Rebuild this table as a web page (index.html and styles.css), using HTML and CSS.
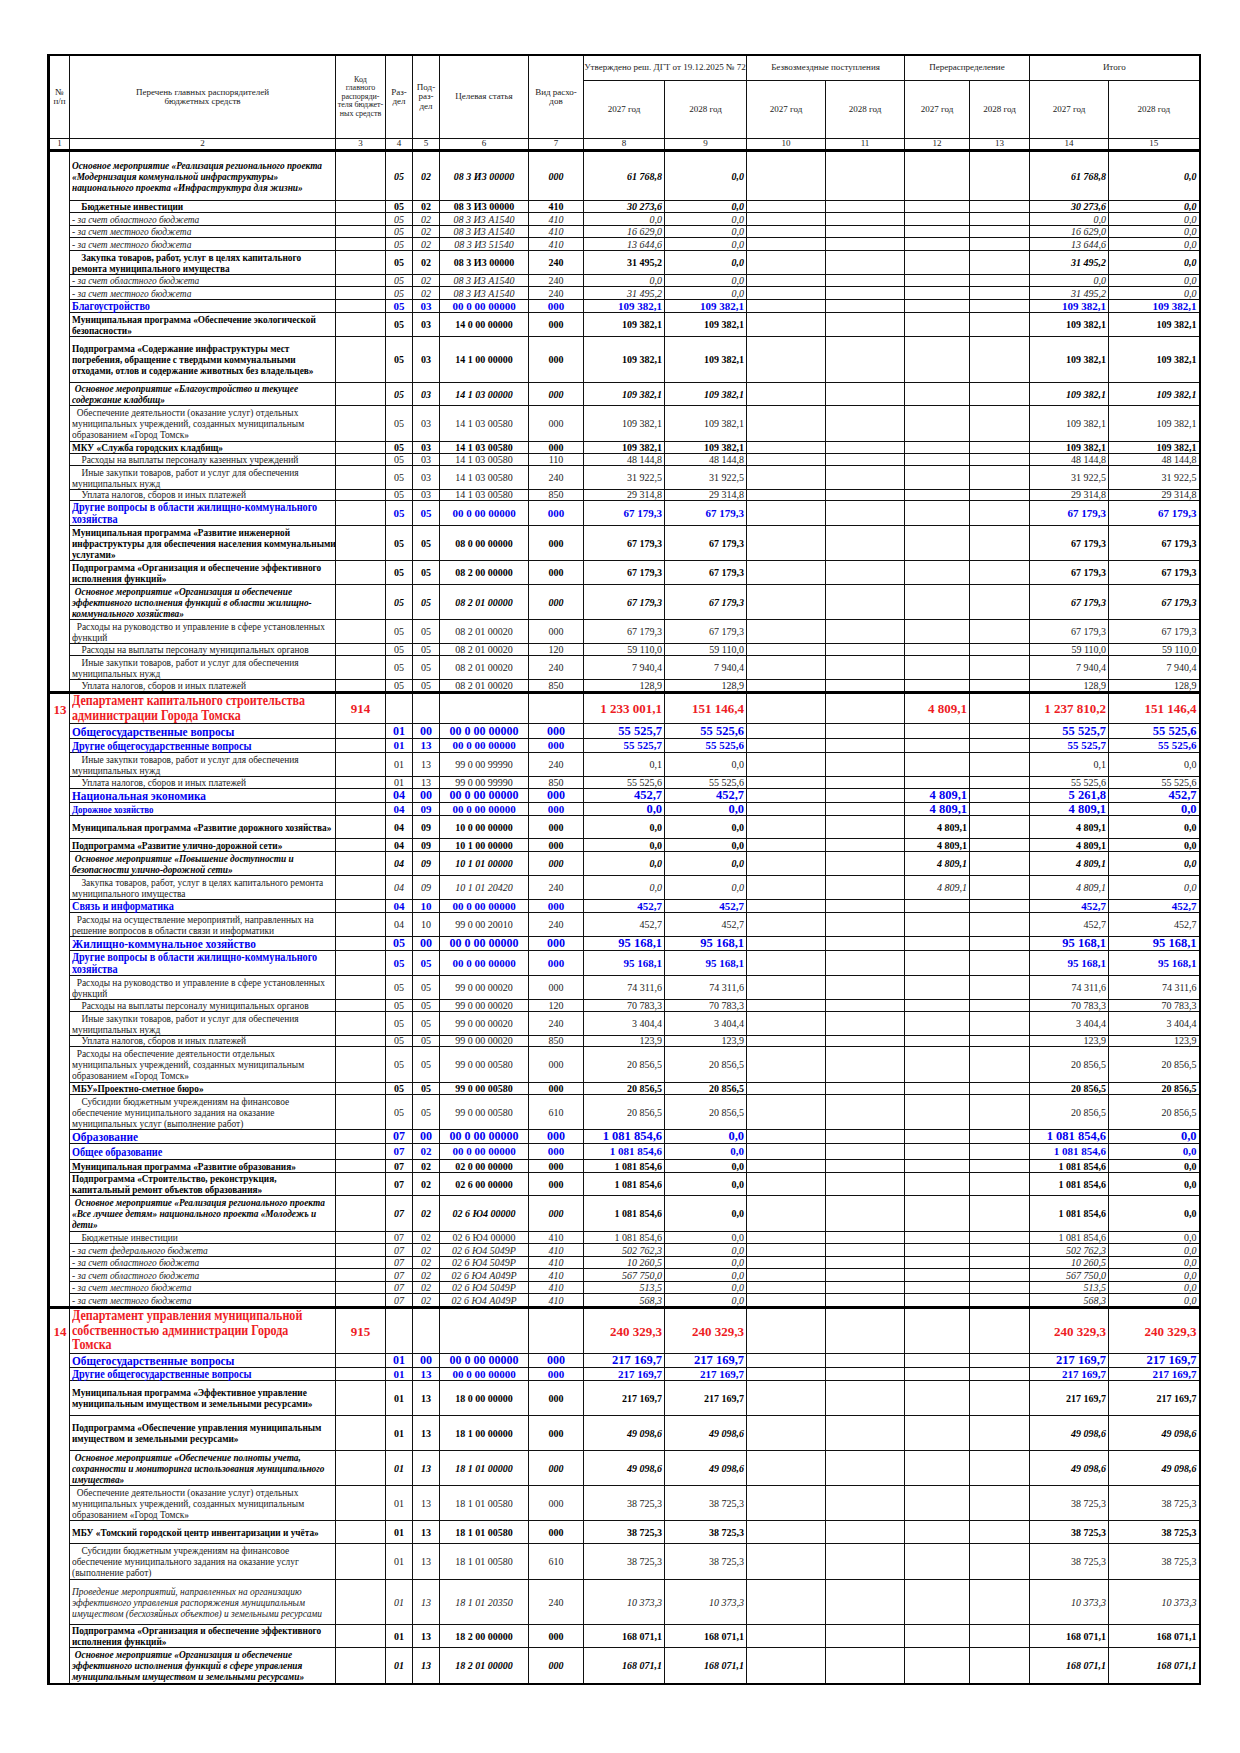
FILE: index.html
```html
<!DOCTYPE html>
<html lang="ru">
<head>
<meta charset="utf-8">
<title>Ведомственная структура расходов</title>
<link rel="stylesheet" href="styles.css">
</head>
<body>
<div class="page">
<table class="tbl">
<colgroup>
<col class="w21"><col class="w266"><col class="w50"><col class="w27"><col class="w27"><col class="w89"><col class="w55">
<col class="w81"><col class="w82"><col class="w79"><col class="w79"><col class="w65"><col class="w60"><col class="w79"><col class="w91">
</colgroup>
<thead>
<tr class="hd1">
<th rowspan="2" class="first">№<br>п/п</th>
<th rowspan="2">Перечень главных распорядителей<br>бюджетных средств</th>
<th rowspan="2" class="code-h">Код<br>главного<br>распоряди-<br>теля бюджет-<br>ных средств</th>
<th rowspan="2">Раз-<br>дел</th>
<th rowspan="2">Под-<br>раз-<br>дел</th>
<th rowspan="2">Целевая статья</th>
<th rowspan="2">Вид расхо-<br>дов</th>
<th colspan="2">Утверждено реш. ДГТ от 19.12.2025 № 72</th>
<th colspan="2">Безвозмездные поступления</th>
<th colspan="2">Перераспределение</th>
<th colspan="2">Итого</th>
</tr>
<tr class="hd2">
<th>2027 год</th><th>2028 год</th><th>2027 год</th><th>2028 год</th><th>2027 год</th><th>2028 год</th><th>2027 год</th><th>2028 год</th>
</tr>
<tr class="hd3">
<th class="first">1</th><th>2</th><th>3</th><th>4</th><th>5</th><th>6</th><th>7</th><th>8</th><th>9</th><th>10</th><th>11</th><th>12</th><th>13</th><th>14</th><th>15</th>
</tr>
</thead>
<tbody>
<tr class="h49 bi"><td class="num" rowspan="25"></td><td class="n"><span>Основное мероприятие «Реализация регионального проекта<br>«Модернизация коммунальной инфраструктуры»<br>национального проекта «Инфраструктура для жизни»</span></td><td></td><td>05</td><td>02</td><td>08 3 И3 00000</td><td>000</td><td class="v">61 768,8</td><td class="v">0,0</td><td></td><td></td><td></td><td></td><td class="v">61 768,8</td><td class="v">0,0</td></tr>
<tr class="h12 b"><td class="n"><span class="ti10">Бюджетные инвестиции</span></td><td></td><td>05</td><td>02</td><td>08 3 И3 00000</td><td>410</td><td class="v it">30 273,6</td><td class="v it">0,0</td><td></td><td></td><td></td><td></td><td class="v it">30 273,6</td><td class="v it">0,0</td></tr>
<tr class="h13 i"><td class="n"><span>- за счет областного бюджета</span></td><td></td><td>05</td><td>02</td><td>08 3 И3 А1540</td><td>410</td><td class="v">0,0</td><td class="v">0,0</td><td></td><td></td><td></td><td></td><td class="v">0,0</td><td class="v">0,0</td></tr>
<tr class="h12 i"><td class="n"><span>- за счет местного бюджета</span></td><td></td><td>05</td><td>02</td><td>08 3 И3 А1540</td><td>410</td><td class="v">16 629,0</td><td class="v">0,0</td><td></td><td></td><td></td><td></td><td class="v">16 629,0</td><td class="v">0,0</td></tr>
<tr class="h13 i"><td class="n"><span>- за счет местного бюджета</span></td><td></td><td>05</td><td>02</td><td>08 3 И3 51540</td><td>410</td><td class="v">13 644,6</td><td class="v">0,0</td><td></td><td></td><td></td><td></td><td class="v">13 644,6</td><td class="v">0,0</td></tr>
<tr class="h24 b"><td class="n"><span class="ti10">Закупка товаров, работ, услуг в целях капитального<br>ремонта муниципального имущества</span></td><td></td><td>05</td><td>02</td><td>08 3 И3 00000</td><td>240</td><td class="v">31 495,2</td><td class="v it">0,0</td><td></td><td></td><td></td><td></td><td class="v it">31 495,2</td><td class="v it">0,0</td></tr>
<tr class="h12 i"><td class="n"><span>- за счет областного бюджета</span></td><td></td><td>05</td><td>02</td><td>08 3 И3 А1540</td><td class="up">240</td><td class="v">0,0</td><td class="v">0,0</td><td></td><td></td><td></td><td></td><td class="v">0,0</td><td class="v">0,0</td></tr>
<tr class="h13 i"><td class="n"><span>- за счет местного бюджета</span></td><td></td><td>05</td><td>02</td><td>08 3 И3 А1540</td><td class="up">240</td><td class="v">31 495,2</td><td class="v">0,0</td><td></td><td></td><td></td><td></td><td class="v">31 495,2</td><td class="v">0,0</td></tr>
<tr class="h12 bl md"><td class="n"><span>Благоустройство</span></td><td></td><td>05</td><td>03</td><td>00 0 00 00000</td><td>000</td><td class="v">109 382,1</td><td class="v">109 382,1</td><td></td><td></td><td></td><td></td><td class="v">109 382,1</td><td class="v">109 382,1</td></tr>
<tr class="h24 b"><td class="n"><span>Муниципальная программа «Обеспечение экологической<br>безопасности»</span></td><td></td><td>05</td><td>03</td><td>14 0 00 00000</td><td>000</td><td class="v">109 382,1</td><td class="v">109 382,1</td><td></td><td></td><td></td><td></td><td class="v">109 382,1</td><td class="v">109 382,1</td></tr>
<tr class="h47 b"><td class="n"><span>Подпрограмма «Содержание инфраструктуры мест<br>погребения, обращение с твердыми коммунальными<br>отходами, отлов и содержание животных без владельцев»</span></td><td></td><td>05</td><td>03</td><td>14 1 00 00000</td><td>000</td><td class="v">109 382,1</td><td class="v">109 382,1</td><td></td><td></td><td></td><td></td><td class="v">109 382,1</td><td class="v">109 382,1</td></tr>
<tr class="h23 bi"><td class="n"><span class="ti3">Основное мероприятие «Благоустройство и текущее<br>содержание кладбищ»</span></td><td></td><td>05</td><td>03</td><td>14 1 03 00000</td><td>000</td><td class="v">109 382,1</td><td class="v">109 382,1</td><td></td><td></td><td></td><td></td><td class="v">109 382,1</td><td class="v">109 382,1</td></tr>
<tr class="h36"><td class="n"><span class="ti5">Обеспечение деятельности (оказание услуг) отдельных<br>муниципальных учреждений, созданных муниципальным<br>образованием «Город Томск»</span></td><td></td><td>05</td><td>03</td><td>14 1 03 00580</td><td>000</td><td class="v">109 382,1</td><td class="v">109 382,1</td><td></td><td></td><td></td><td></td><td class="v">109 382,1</td><td class="v">109 382,1</td></tr>
<tr class="h12 b"><td class="n"><span>МКУ «Служба городских кладбищ»</span></td><td></td><td>05</td><td>03</td><td>14 1 03 00580</td><td>000</td><td class="v">109 382,1</td><td class="v">109 382,1</td><td></td><td></td><td></td><td></td><td class="v">109 382,1</td><td class="v">109 382,1</td></tr>
<tr class="h12"><td class="n"><span class="ti10">Расходы на выплаты персоналу казенных учреждений</span></td><td></td><td>05</td><td>03</td><td>14 1 03 00580</td><td>110</td><td class="v">48 144,8</td><td class="v">48 144,8</td><td></td><td></td><td></td><td></td><td class="v">48 144,8</td><td class="v">48 144,8</td></tr>
<tr class="h24"><td class="n"><span class="ti10">Иные закупки товаров, работ и услуг для обеспечения<br>муниципальных нужд</span></td><td></td><td>05</td><td>03</td><td>14 1 03 00580</td><td>240</td><td class="v">31 922,5</td><td class="v">31 922,5</td><td></td><td></td><td></td><td></td><td class="v">31 922,5</td><td class="v">31 922,5</td></tr>
<tr class="h11"><td class="n"><span class="ti10">Уплата налогов, сборов и иных платежей</span></td><td></td><td>05</td><td>03</td><td>14 1 03 00580</td><td>850</td><td class="v">29 314,8</td><td class="v">29 314,8</td><td></td><td></td><td></td><td></td><td class="v">29 314,8</td><td class="v">29 314,8</td></tr>
<tr class="h25 bl md"><td class="n"><span>Другие вопросы в области жилищно-коммунального<br>хозяйства</span></td><td></td><td>05</td><td>05</td><td>00 0 00 00000</td><td>000</td><td class="v">67 179,3</td><td class="v">67 179,3</td><td></td><td></td><td></td><td></td><td class="v">67 179,3</td><td class="v">67 179,3</td></tr>
<tr class="h35 b"><td class="n"><span>Муниципальная программа «Развитие инженерной<br>инфраструктуры для обеспечения населения коммунальными<br>услугами»</span></td><td></td><td>05</td><td>05</td><td>08 0 00 00000</td><td>000</td><td class="v">67 179,3</td><td class="v">67 179,3</td><td></td><td></td><td></td><td></td><td class="v">67 179,3</td><td class="v">67 179,3</td></tr>
<tr class="h24 b"><td class="n"><span>Подпрограмма «Организация и обеспечение эффективного<br>исполнения функций»</span></td><td></td><td>05</td><td>05</td><td>08 2 00 00000</td><td>000</td><td class="v">67 179,3</td><td class="v">67 179,3</td><td></td><td></td><td></td><td></td><td class="v">67 179,3</td><td class="v">67 179,3</td></tr>
<tr class="h35 bi"><td class="n"><span class="ti3">Основное мероприятие «Организация и обеспечение<br>эффективного исполнения функций в области жилищно-<br>коммунального хозяйства»</span></td><td></td><td>05</td><td>05</td><td>08 2 01 00000</td><td>000</td><td class="v">67 179,3</td><td class="v">67 179,3</td><td></td><td></td><td></td><td></td><td class="v">67 179,3</td><td class="v">67 179,3</td></tr>
<tr class="h24"><td class="n"><span class="ti5">Расходы на руководство и управление в сфере установленных<br>функций</span></td><td></td><td>05</td><td>05</td><td>08 2 01 00020</td><td>000</td><td class="v">67 179,3</td><td class="v">67 179,3</td><td></td><td></td><td></td><td></td><td class="v">67 179,3</td><td class="v">67 179,3</td></tr>
<tr class="h12"><td class="n"><span class="ti10">Расходы на выплаты персоналу муниципальных органов</span></td><td></td><td>05</td><td>05</td><td>08 2 01 00020</td><td>120</td><td class="v">59 110,0</td><td class="v">59 110,0</td><td></td><td></td><td></td><td></td><td class="v">59 110,0</td><td class="v">59 110,0</td></tr>
<tr class="h24"><td class="n"><span class="ti10">Иные закупки товаров, работ и услуг для обеспечения<br>муниципальных нужд</span></td><td></td><td>05</td><td>05</td><td>08 2 01 00020</td><td>240</td><td class="v">7 940,4</td><td class="v">7 940,4</td><td></td><td></td><td></td><td></td><td class="v">7 940,4</td><td class="v">7 940,4</td></tr>
<tr class="h12"><td class="n"><span class="ti10">Уплата налогов, сборов и иных платежей</span></td><td></td><td>05</td><td>05</td><td>08 2 01 00020</td><td>850</td><td class="v">128,9</td><td class="v">128,9</td><td></td><td></td><td></td><td></td><td class="v">128,9</td><td class="v">128,9</td></tr>

<tr class="h31 red sec"><td class="num p8" rowspan="33">13</td><td class="n"><span>Департамент капитального строительства<br>администрации Города Томска</span></td><td>914</td><td></td><td></td><td></td><td></td><td class="v">1 233 001,1</td><td class="v">151 146,4</td><td></td><td></td><td class="v">4 809,1</td><td></td><td class="v">1 237 810,2</td><td class="v">151 146,4</td></tr>
<tr class="h15 bl lg"><td class="n"><span>Общегосударственные вопросы</span></td><td></td><td>01</td><td>00</td><td>00 0 00 00000</td><td>000</td><td class="v">55 525,7</td><td class="v">55 525,6</td><td></td><td></td><td></td><td></td><td class="v">55 525,7</td><td class="v">55 525,6</td></tr>
<tr class="h14 bl md"><td class="n"><span>Другие общегосударственные вопросы</span></td><td></td><td>01</td><td>13</td><td>00 0 00 00000</td><td>000</td><td class="v">55 525,7</td><td class="v">55 525,6</td><td></td><td></td><td></td><td></td><td class="v">55 525,7</td><td class="v">55 525,6</td></tr>
<tr class="h24"><td class="n"><span class="ti10">Иные закупки товаров, работ и услуг для обеспечения<br>муниципальных нужд</span></td><td></td><td>01</td><td>13</td><td>99 0 00 99990</td><td>240</td><td class="v">0,1</td><td class="v">0,0</td><td></td><td></td><td></td><td></td><td class="v">0,1</td><td class="v">0,0</td></tr>
<tr class="h12"><td class="n"><span class="ti10">Уплата налогов, сборов и иных платежей</span></td><td></td><td>01</td><td>13</td><td>99 0 00 99990</td><td>850</td><td class="v">55 525,6</td><td class="v">55 525,6</td><td></td><td></td><td></td><td></td><td class="v">55 525,6</td><td class="v">55 525,6</td></tr>
<tr class="h14 bl lg"><td class="n"><span>Национальная экономика</span></td><td></td><td>04</td><td>00</td><td>00 0 00 00000</td><td>000</td><td class="v">452,7</td><td class="v">452,7</td><td></td><td></td><td class="v">4 809,1</td><td></td><td class="v">5 261,8</td><td class="v">452,7</td></tr>
<tr class="h13 bl md sm"><td class="n"><span>Дорожное хозяйство</span></td><td></td><td>04</td><td>09</td><td>00 0 00 00000</td><td>000</td><td class="v">0,0</td><td class="v">0,0</td><td></td><td></td><td class="v">4 809,1</td><td></td><td class="v">4 809,1</td><td class="v">0,0</td></tr>
<tr class="h23 b"><td class="n"><span>Муниципальная программа «Развитие дорожного хозяйства»</span></td><td></td><td>04</td><td>09</td><td>10 0 00 00000</td><td>000</td><td class="v">0,0</td><td class="v">0,0</td><td></td><td></td><td class="v">4 809,1</td><td></td><td class="v">4 809,1</td><td class="v">0,0</td></tr>
<tr class="h13 b"><td class="n"><span>Подпрограмма «Развитие улично-дорожной сети»</span></td><td></td><td>04</td><td>09</td><td>10 1 00 00000</td><td>000</td><td class="v">0,0</td><td class="v">0,0</td><td></td><td></td><td class="v">4 809,1</td><td></td><td class="v">4 809,1</td><td class="v">0,0</td></tr>
<tr class="h24 bi"><td class="n"><span class="ti3">Основное мероприятие «Повышение доступности и<br>безопасности улично-дорожной сети»</span></td><td></td><td>04</td><td>09</td><td>10 1 01 00000</td><td>000</td><td class="v">0,0</td><td class="v">0,0</td><td></td><td></td><td class="v">4 809,1</td><td></td><td class="v">4 809,1</td><td class="v">0,0</td></tr>
<tr class="h24"><td class="n"><span class="ti10">Закупка товаров, работ, услуг в целях капитального ремонта<br>муниципального имущества</span></td><td></td><td class="it">04</td><td class="it">09</td><td class="it">10 1 01 20420</td><td>240</td><td class="v it">0,0</td><td class="v it">0,0</td><td></td><td></td><td class="v it">4 809,1</td><td></td><td class="v it">4 809,1</td><td class="v it">0,0</td></tr>
<tr class="h12 bl md"><td class="n"><span>Связь и информатика</span></td><td></td><td>04</td><td>10</td><td>00 0 00 00000</td><td>000</td><td class="v">452,7</td><td class="v">452,7</td><td></td><td></td><td></td><td></td><td class="v">452,7</td><td class="v">452,7</td></tr>
<tr class="h24"><td class="n"><span class="ti5">Расходы на осуществление мероприятий, направленных на<br>решение вопросов в области связи и информатики</span></td><td></td><td>04</td><td>10</td><td>99 0 00 20010</td><td>240</td><td class="v">452,7</td><td class="v">452,7</td><td></td><td></td><td></td><td></td><td class="v">452,7</td><td class="v">452,7</td></tr>
<tr class="h14 bl lg"><td class="n"><span>Жилищно-коммунальное хозяйство</span></td><td></td><td>05</td><td>00</td><td>00 0 00 00000</td><td>000</td><td class="v">95 168,1</td><td class="v">95 168,1</td><td></td><td></td><td></td><td></td><td class="v">95 168,1</td><td class="v">95 168,1</td></tr>
<tr class="h25 bl md"><td class="n"><span>Другие вопросы в области жилищно-коммунального<br>хозяйства</span></td><td></td><td>05</td><td>05</td><td>00 0 00 00000</td><td>000</td><td class="v">95 168,1</td><td class="v">95 168,1</td><td></td><td></td><td></td><td></td><td class="v">95 168,1</td><td class="v">95 168,1</td></tr>
<tr class="h24"><td class="n"><span class="ti5">Расходы на руководство и управление в сфере установленных<br>функций</span></td><td></td><td>05</td><td>05</td><td>99 0 00 00020</td><td>000</td><td class="v">74 311,6</td><td class="v">74 311,6</td><td></td><td></td><td></td><td></td><td class="v">74 311,6</td><td class="v">74 311,6</td></tr>
<tr class="h12"><td class="n"><span class="ti10">Расходы на выплаты персоналу муниципальных органов</span></td><td></td><td>05</td><td>05</td><td>99 0 00 00020</td><td>120</td><td class="v">70 783,3</td><td class="v">70 783,3</td><td></td><td></td><td></td><td></td><td class="v">70 783,3</td><td class="v">70 783,3</td></tr>
<tr class="h24"><td class="n"><span class="ti10">Иные закупки товаров, работ и услуг для обеспечения<br>муниципальных нужд</span></td><td></td><td>05</td><td>05</td><td>99 0 00 00020</td><td>240</td><td class="v">3 404,4</td><td class="v">3 404,4</td><td></td><td></td><td></td><td></td><td class="v">3 404,4</td><td class="v">3 404,4</td></tr>
<tr class="h11"><td class="n"><span class="ti10">Уплата налогов, сборов и иных платежей</span></td><td></td><td>05</td><td>05</td><td>99 0 00 00020</td><td>850</td><td class="v">123,9</td><td class="v">123,9</td><td></td><td></td><td></td><td></td><td class="v">123,9</td><td class="v">123,9</td></tr>
<tr class="h36"><td class="n"><span class="ti5">Расходы на обеспечение деятельности отдельных<br>муниципальных учреждений, созданных муниципальным<br>образованием «Город Томск»</span></td><td></td><td>05</td><td>05</td><td>99 0 00 00580</td><td>000</td><td class="v">20 856,5</td><td class="v">20 856,5</td><td></td><td></td><td></td><td></td><td class="v">20 856,5</td><td class="v">20 856,5</td></tr>
<tr class="h12 b"><td class="n"><span>МБУ»Проектно-сметное бюро»</span></td><td></td><td>05</td><td>05</td><td>99 0 00 00580</td><td>000</td><td class="v">20 856,5</td><td class="v">20 856,5</td><td></td><td></td><td></td><td></td><td class="v">20 856,5</td><td class="v">20 856,5</td></tr>
<tr class="h35"><td class="n"><span class="ti10">Субсидии бюджетным учреждениям на финансовое<br>обеспечение муниципального задания на оказание<br>муниципальных услуг (выполнение работ)</span></td><td></td><td>05</td><td>05</td><td>99 0 00 00580</td><td>610</td><td class="v">20 856,5</td><td class="v">20 856,5</td><td></td><td></td><td></td><td></td><td class="v">20 856,5</td><td class="v">20 856,5</td></tr>
<tr class="h14 bl lg"><td class="n"><span>Образование</span></td><td></td><td>07</td><td>00</td><td>00 0 00 00000</td><td>000</td><td class="v">1 081 854,6</td><td class="v">0,0</td><td></td><td></td><td></td><td></td><td class="v">1 081 854,6</td><td class="v">0,0</td></tr>
<tr class="h16 bl md"><td class="n"><span>Общее образование</span></td><td></td><td>07</td><td>02</td><td>00 0 00 00000</td><td>000</td><td class="v">1 081 854,6</td><td class="v">0,0</td><td></td><td></td><td></td><td></td><td class="v">1 081 854,6</td><td class="v">0,0</td></tr>
<tr class="h13 b"><td class="n"><span>Муниципальная программа «Развитие образования»</span></td><td></td><td>07</td><td>02</td><td>02 0 00 00000</td><td>000</td><td class="v">1 081 854,6</td><td class="v">0,0</td><td></td><td></td><td></td><td></td><td class="v">1 081 854,6</td><td class="v">0,0</td></tr>
<tr class="h23 b"><td class="n"><span>Подпрограмма «Строительство, реконструкция,<br>капитальный ремонт объектов образования»</span></td><td></td><td>07</td><td>02</td><td>02 6 00 00000</td><td>000</td><td class="v">1 081 854,6</td><td class="v">0,0</td><td></td><td></td><td></td><td></td><td class="v">1 081 854,6</td><td class="v">0,0</td></tr>
<tr class="h36 bi"><td class="n"><span class="ti3">Основное мероприятие «Реализация регионального проекта<br>«Все лучшее детям» национального проекта «Молодежь и<br>дети»</span></td><td></td><td>07</td><td>02</td><td>02 6 Ю4 00000</td><td>000</td><td class="v up">1 081 854,6</td><td class="v up">0,0</td><td></td><td></td><td></td><td></td><td class="v up">1 081 854,6</td><td class="v up">0,0</td></tr>
<tr class="h12"><td class="n"><span class="ti10">Бюджетные инвестиции</span></td><td></td><td>07</td><td>02</td><td>02 6 Ю4 00000</td><td>410</td><td class="v">1 081 854,6</td><td class="v">0,0</td><td></td><td></td><td></td><td></td><td class="v">1 081 854,6</td><td class="v">0,0</td></tr>
<tr class="h13 i"><td class="n"><span>- за счет федерального бюджета</span></td><td></td><td>07</td><td>02</td><td>02 6 Ю4 5049Р</td><td>410</td><td class="v">502 762,3</td><td class="v">0,0</td><td></td><td></td><td></td><td></td><td class="v">502 762,3</td><td class="v">0,0</td></tr>
<tr class="h12 i"><td class="n"><span>- за счет областного бюджета</span></td><td></td><td>07</td><td>02</td><td>02 6 Ю4 5049Р</td><td>410</td><td class="v">10 260,5</td><td class="v">0,0</td><td></td><td></td><td></td><td></td><td class="v">10 260,5</td><td class="v">0,0</td></tr>
<tr class="h13 i"><td class="n"><span>- за счет областного бюджета</span></td><td></td><td>07</td><td>02</td><td>02 6 Ю4 А049Р</td><td>410</td><td class="v">567 750,0</td><td class="v">0,0</td><td></td><td></td><td></td><td></td><td class="v">567 750,0</td><td class="v">0,0</td></tr>
<tr class="h12 i"><td class="n"><span>- за счет местного бюджета</span></td><td></td><td>07</td><td>02</td><td>02 6 Ю4 5049Р</td><td>410</td><td class="v">513,5</td><td class="v">0,0</td><td></td><td></td><td></td><td></td><td class="v">513,5</td><td class="v">0,0</td></tr>
<tr class="h13 i"><td class="n"><span>- за счет местного бюджета</span></td><td></td><td>07</td><td>02</td><td>02 6 Ю4 А049Р</td><td>410</td><td class="v">568,3</td><td class="v">0,0</td><td></td><td></td><td></td><td></td><td class="v">568,3</td><td class="v">0,0</td></tr>

<tr class="h46 red sec"><td class="num p16" rowspan="12">14</td><td class="n"><span>Департамент управления муниципальной<br>собственностью администрации Города<br>Томска</span></td><td>915</td><td></td><td></td><td></td><td></td><td class="v">240 329,3</td><td class="v">240 329,3</td><td></td><td></td><td></td><td></td><td class="v">240 329,3</td><td class="v">240 329,3</td></tr>
<tr class="h14 bl lg"><td class="n"><span>Общегосударственные вопросы</span></td><td></td><td>01</td><td>00</td><td>00 0 00 00000</td><td>000</td><td class="v">217 169,7</td><td class="v">217 169,7</td><td></td><td></td><td></td><td></td><td class="v">217 169,7</td><td class="v">217 169,7</td></tr>
<tr class="h13 bl md"><td class="n"><span>Другие общегосударственные вопросы</span></td><td></td><td>01</td><td>13</td><td>00 0 00 00000</td><td>000</td><td class="v">217 169,7</td><td class="v">217 169,7</td><td></td><td></td><td></td><td></td><td class="v">217 169,7</td><td class="v">217 169,7</td></tr>
<tr class="h35 b"><td class="n"><span>Муниципальная программа «Эффективное управление<br>муниципальным имуществом и земельными ресурсами»</span></td><td></td><td>01</td><td>13</td><td>18 0 00 00000</td><td>000</td><td class="v">217 169,7</td><td class="v">217 169,7</td><td></td><td></td><td></td><td></td><td class="v">217 169,7</td><td class="v">217 169,7</td></tr>
<tr class="h35 b"><td class="n"><span>Подпрограмма «Обеспечение управления муниципальным<br>имуществом и земельными ресурсами»</span></td><td></td><td>01</td><td>13</td><td>18 1 00 00000</td><td>000</td><td class="v it">49 098,6</td><td class="v it">49 098,6</td><td></td><td></td><td></td><td></td><td class="v it">49 098,6</td><td class="v it">49 098,6</td></tr>
<tr class="h35 bi"><td class="n"><span class="ti3">Основное мероприятие «Обеспечение полноты учета,<br>сохранности и мониторинга использования муниципального<br>имущества»</span></td><td></td><td>01</td><td>13</td><td>18 1 01 00000</td><td>000</td><td class="v">49 098,6</td><td class="v">49 098,6</td><td></td><td></td><td></td><td></td><td class="v">49 098,6</td><td class="v">49 098,6</td></tr>
<tr class="h35"><td class="n"><span class="ti5">Обеспечение деятельности (оказание услуг) отдельных<br>муниципальных учреждений, созданных муниципальным<br>образованием «Город Томск»</span></td><td></td><td>01</td><td>13</td><td>18 1 01 00580</td><td>000</td><td class="v">38 725,3</td><td class="v">38 725,3</td><td></td><td></td><td></td><td></td><td class="v">38 725,3</td><td class="v">38 725,3</td></tr>
<tr class="h23 b"><td class="n"><span>МБУ «Томский городской центр инвентаризации и учёта»</span></td><td></td><td>01</td><td>13</td><td>18 1 01 00580</td><td>000</td><td class="v">38 725,3</td><td class="v">38 725,3</td><td></td><td></td><td></td><td></td><td class="v">38 725,3</td><td class="v">38 725,3</td></tr>
<tr class="h36"><td class="n"><span class="ti10">Субсидии бюджетным учреждениям на финансовое<br>обеспечение муниципального задания на оказание услуг<br>(выполнение работ)</span></td><td></td><td>01</td><td>13</td><td>18 1 01 00580</td><td>610</td><td class="v">38 725,3</td><td class="v">38 725,3</td><td></td><td></td><td></td><td></td><td class="v">38 725,3</td><td class="v">38 725,3</td></tr>
<tr class="h46 i"><td class="n"><span>Проведение мероприятий, направленных на организацию<br>эффективного управления распоряжения муниципальным<br>имуществом (бесхозяйных объектов) и земельными ресурсами</span></td><td></td><td>01</td><td>13</td><td>18 1 01 20350</td><td class="up">240</td><td class="v">10 373,3</td><td class="v">10 373,3</td><td></td><td></td><td></td><td></td><td class="v">10 373,3</td><td class="v">10 373,3</td></tr>
<tr class="h23 b"><td class="n"><span>Подпрограмма «Организация и обеспечение эффективного<br>исполнения функций»</span></td><td></td><td>01</td><td>13</td><td>18 2 00 00000</td><td>000</td><td class="v">168 071,1</td><td class="v">168 071,1</td><td></td><td></td><td></td><td></td><td class="v">168 071,1</td><td class="v">168 071,1</td></tr>
<tr class="h36 bi"><td class="n"><span class="ti3">Основное мероприятие «Организация и обеспечение<br>эффективного исполнения функций в сфере управления<br>муниципальным имуществом и земельными ресурсами»</span></td><td></td><td>01</td><td>13</td><td>18 2 01 00000</td><td>000</td><td class="v">168 071,1</td><td class="v">168 071,1</td><td></td><td></td><td></td><td></td><td class="v">168 071,1</td><td class="v">168 071,1</td></tr>
</tbody>
</table>
</div>
</body>
</html>
```

FILE: styles.css
```css
html, body {
  margin: 0;
  padding: 0;
  background: #ffffff;
}

.page {
  padding: 54px 0 0 47px;
}

.tbl {
  border-collapse: collapse;
  table-layout: fixed;
  width: 1151px;
  font-family: "Liberation Serif", "Times New Roman", serif;
  color: #1a1a1a;
  border: 2px solid #000;
}

.w21 { width: 21px; }
.w266 { width: 266px; }
.w50 { width: 50px; }
.w27 { width: 27px; }
.w89 { width: 89px; }
.w55 { width: 55px; }
.w81 { width: 81px; }
.w82 { width: 82px; }
.w79 { width: 79px; }
.w65 { width: 65px; }
.w60 { width: 60px; }
.w91 { width: 91px; }

.tbl th,
.tbl td {
  border: 1px solid #111;
  padding: 0;
  vertical-align: middle;
  text-align: center;
  white-space: nowrap;
  font-size: 10px;
  line-height: 11px;
}

/* header */
.tbl thead th {
  font-weight: normal;
  font-size: 9px;
  line-height: 9.5px;
  color: #222;
  overflow: hidden;
}
.tbl thead th.first { border-left: 3px solid #000; }
.tbl thead th.code-h { font-size: 8px; line-height: 8.4px; }
.hd1 th { height: 24px; }
.hd2 th { height: 57px; }
.hd3 th { height: 10px; border-bottom: 3px solid #000; font-size: 8.5px; }

/* body cells */
.tbl td.n {
  text-align: left;
  padding-left: 2px;
}
.tbl td.n > span {
  display: inline-block;
  vertical-align: top;
  transform: scaleX(0.94);
  transform-origin: 0 50%;
}
.tbl tr.b > td.n > span,
.tbl tr.bi > td.n > span { transform: scaleX(0.93); }
.tbl tr.bl.md > td.n > span { transform: scaleX(0.89); }
.tbl tr.bl.lg > td.n > span { transform: scaleX(0.87); }
.tbl tr.red > td.n > span { transform: scaleX(0.86); }

.tbl td.v {
  text-align: right;
  padding-right: 2px;
}
.ti3 { text-indent: 3px; }
.ti5 { text-indent: 5px; }
.ti10 { text-indent: 10px; }

.tbl td.num {
  border-left: 3px solid #000;
  vertical-align: top;
  font-weight: bold;
  color: #ee1c24;
  font-size: 13px;
  line-height: 15px;
  text-align: center;
  padding-left: 1px;
}
.tbl td.p8 { padding-top: 8px; }
.tbl td.p16 { padding-top: 15px; }

/* row heights */
.h11 > td { height: 10px; line-height: 10px; }
.h12 > td { height: 11px; }
.h13 > td { height: 12px; }
.h14 > td { height: 13px; }
.h15 > td { height: 14px; }
.h16 > td { height: 15px; }
.h23 > td { height: 22px; }
.h24 > td { height: 23px; }
.h25 > td { height: 24px; }
.h31 > td { height: 29px; }
.h35 > td { height: 34px; }
.h36 > td { height: 35px; }
.h46 > td { height: 44px; }
.h47 > td { height: 45px; }
.h49 > td { height: 48px; }

.tbl tr.sec > td { border-top: 3px solid #000; }

/* row types */
.tbl tr.b > td { font-weight: bold; color: #000; }
.tbl tr.bi > td { font-weight: bold; font-style: italic; color: #000; }
.tbl tr.i > td { font-style: italic; color: #222; }

.tbl tr.bl > td { font-weight: bold; color: #0000f0; }
.tbl tr.lg > td { font-size: 12px; }
.tbl tr.lg > td.n { font-size: 13px; }
.tbl tr.lg > td.v { font-size: 12.5px; }
.tbl tr.md > td { font-size: 11px; }
.tbl tr.md > td.n { font-size: 11.5px; line-height: 12px; }
.tbl tr.sm > td.n { font-size: 10px; line-height: 11px; }
.tbl tr.sm > td.v { font-size: 12.5px; }

.tbl tr.red > td { font-weight: bold; color: #ee1c24; font-size: 13px; }
.tbl tr.red > td.n { font-size: 14px; line-height: 14.5px; }

/* per-cell overrides */
.tbl tr > td.it { font-style: italic; }
.tbl tr > td.up { font-style: normal; }
```
